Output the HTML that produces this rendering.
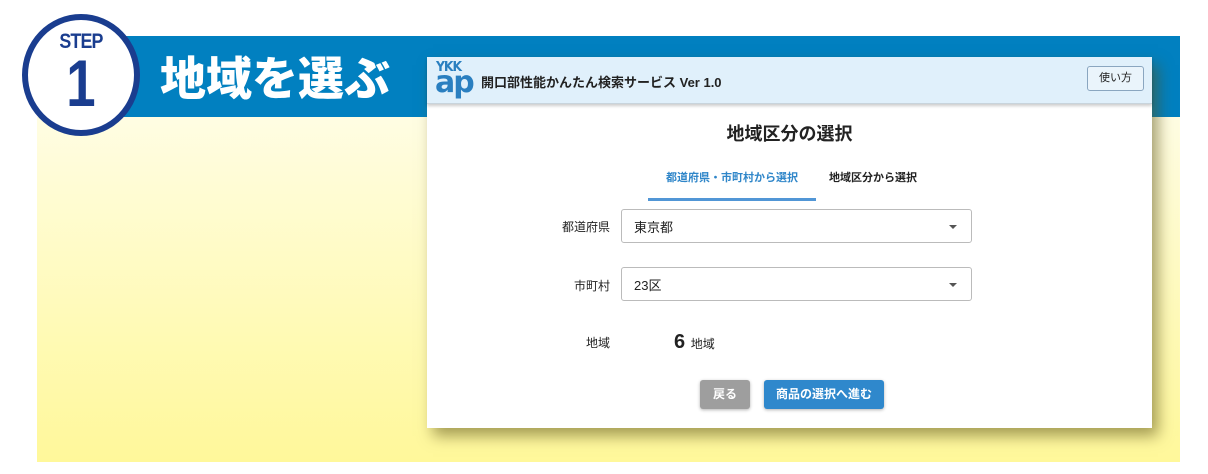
<!DOCTYPE html>
<html><head><meta charset="utf-8"><style>
*{margin:0;padding:0;box-sizing:border-box}
body{width:1208px;height:474px;background:#fff;position:relative;overflow:hidden;font-family:"Liberation Sans","Noto Sans CJK JP",sans-serif;color:#222}
.yel{position:absolute;left:37px;top:117px;width:1143px;height:345px;background:linear-gradient(#fffde3,#fff89a)}
.band{position:absolute;left:120px;top:36px;width:1060px;height:81px;background:#0180c0}
.circ{position:absolute;left:22px;top:14px;width:118px;height:122px;border-radius:50%;border:6px solid #1a3d8f;background:#fff;text-align:center;color:#1a3d8f}
.circ .s{font-size:21px;font-weight:bold;margin-top:10px;letter-spacing:-1px;transform:scaleX(.85)}
.circ .n{font-size:66px;font-weight:bold;line-height:58px;transform:scaleX(.8)}
.ttl{position:absolute;left:160px;top:48px;color:#fff;font-size:46px;font-weight:900;letter-spacing:0px;font-family:"Noto Sans CJK JP",sans-serif;line-height:56px}
.card{position:absolute;left:427px;top:57px;width:725px;height:371px;background:#fff;box-shadow:6px 8px 14px rgba(90,80,20,.55)}
.hdr{height:47px;background:#e0f0fb;border-bottom:1px solid #c8d4dc;box-shadow:0 2px 3px rgba(0,0,0,.2);position:relative}
.logo{position:absolute;left:8px;top:4px;color:#2a7fc0;font-weight:900;line-height:1;font-family:"DejaVu Sans",sans-serif}
.logo .a{font-size:13px;letter-spacing:-1px;transform:scaleX(.95)}
.logo .b{font-size:30px;margin-top:-6px;letter-spacing:-2px;font-weight:bold}
.ht{position:absolute;left:54px;top:15px;font-size:13px;font-weight:bold}
.use{position:absolute;right:8px;top:9px;width:57px;height:25px;border:1px solid #8aa6c0;border-radius:3px;font-size:11px;text-align:center;line-height:23px;background:#eaf4fb}
h1{position:absolute;top:63px;width:100%;text-align:center;font-size:18px;font-weight:bold}
.tab1{position:absolute;left:221px;top:112px;width:168px;text-align:center;color:#2f86c9;font-size:11px;font-weight:bold;padding-bottom:13px;border-bottom:3px solid #5196d6}
.tab2{position:absolute;left:402px;top:112px;font-size:11px;font-weight:bold}
.lbl{position:absolute;font-size:12px;text-align:right;width:60px}
.sel{position:absolute;left:194px;width:351px;height:34px;border:1px solid #bbb;border-radius:3px;font-size:13px;padding:7px 12px}
.sel:after{content:"";position:absolute;right:14px;top:15px;border:4px solid transparent;border-top:4px solid #555}
.btn{position:absolute;top:323px;height:29px;border-radius:3px;color:#fff;font-size:12px;font-weight:bold;text-align:center;line-height:29px;box-shadow:0 1px 3px rgba(0,0,0,.3)}
</style></head><body>
<div class="yel"></div>
<div class="band"></div>
<div class="circ"><div class="s">STEP</div><div class="n">1</div></div>
<div class="ttl">地域を選ぶ</div>
<div class="card">
<div class="hdr"><div class="logo"><div class="a">YKK</div><div class="b">ap</div></div>
<div class="ht">開口部性能かんたん検索サービス Ver 1.0</div><div class="use">使い方</div></div>
<h1>地域区分の選択</h1>
<div class="tab1">都道府県・市町村から選択</div>
<div class="tab2">地域区分から選択</div>
<div class="lbl" style="left:123px;top:161px">都道府県</div>
<div class="sel" style="top:152px">東京都</div>
<div class="lbl" style="left:123px;top:220px">市町村</div>
<div class="sel" style="top:210px">23区</div>
<div class="lbl" style="left:123px;top:277px">地域</div>
<div style="position:absolute;left:247px;top:274px;font-size:20px;font-weight:bold">6 <span style="font-size:12px;font-weight:normal">地域</span></div>
<div class="btn" style="left:273px;width:50px;background:#9e9e9e">戻る</div>
<div class="btn" style="left:337px;width:120px;background:#2f88cc">商品の選択へ進む</div>
</div>
</body></html>
